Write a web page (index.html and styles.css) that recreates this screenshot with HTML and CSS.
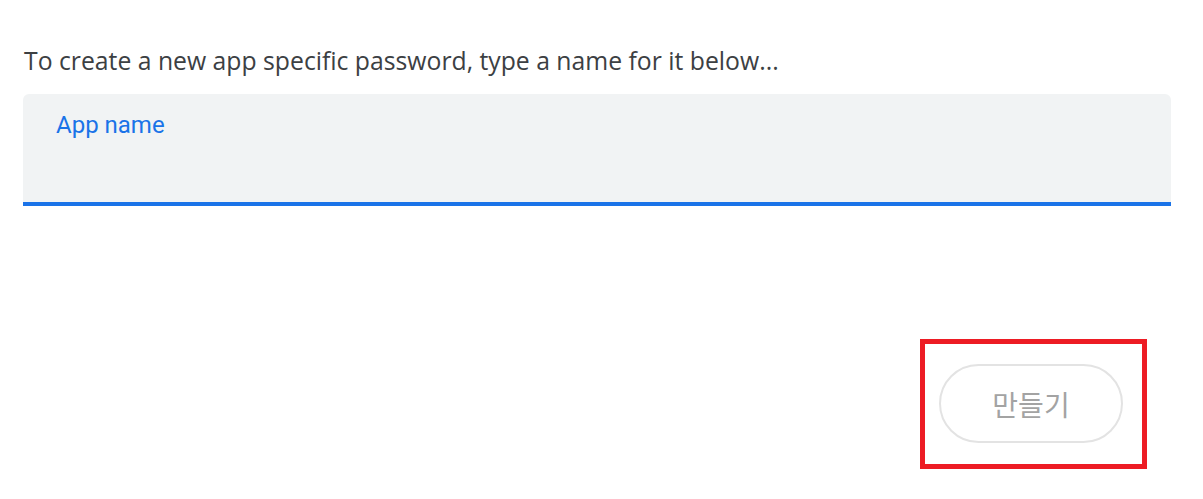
FILE: index.html
```html
<!DOCTYPE html>
<html>
<head>
<meta charset="utf-8">
<link rel="stylesheet" href="styles.css">
</head>
<body>
<div class="page">
  <p class="intro">To create a new app specific password, type a name for it below...</p>
  <div class="field">
    <span class="label">App name</span>
  </div>
  <div class="actions">
    <div class="highlight">
      <button class="create">만들기</button>
    </div>
  </div>
</div>
</body>
</html>
```
FILE: styles.css
```css
html, body {
  margin: 0;
  padding: 0;
  background: #ffffff;
}
.page {
  padding: 45px 32px 0 23px;
  display: flex;
  flex-direction: column;
  font-family: "Open Sans", Roboto, "Noto Sans CJK KR", sans-serif;
}
.intro {
  margin: 0 0 0 1px;
  font-size: 24.75px;
  line-height: 32px;
  color: #3c4043;
}
.field {
  margin-top: 17px;
  background: #f1f3f4;
  border-radius: 6px 6px 0 0;
  border-bottom: 4px solid #1a73e8;
  padding: 17px 0 0 33px;
  box-sizing: border-box;
  height: 112px;
}
.label {
  display: block;
  font-family: Roboto, "Open Sans", sans-serif;
  font-size: 24px;
  color: #1a73e8;
  line-height: 28px;
}
.actions {
  display: flex;
  justify-content: flex-end;
  margin-top: 133px;
  margin-right: 24px;
}
.highlight {
  border: 5px solid #ed1c24;
  padding: 20px 19px 21px 14px;
  display: flex;
}
.create {
  width: 184px;
  height: 79px;
  border: 2px solid #e3e3e3;
  border-radius: 40px;
  background: #ffffff;
  color: #a3a3a3;
  font-family: "Noto Sans CJK KR", sans-serif;
  font-size: 28px;
  padding: 0;
}
```
